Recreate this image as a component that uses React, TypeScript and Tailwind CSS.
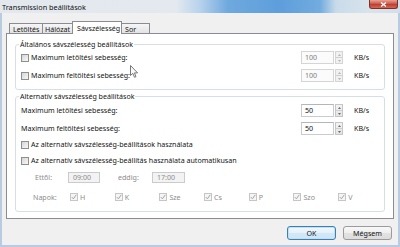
import React from "react";

function Check({ checked = false, disabled = false }: { checked?: boolean; disabled?: boolean }) {
  return (
    <span
      className={
        disabled
          ? "w-[8px] h-[8px] shrink-0 border border-[#c6c6c6] bg-[#f5f5f5] flex items-center justify-center"
          : "w-[8px] h-[8px] shrink-0 border border-[#8e8f8f] bg-[linear-gradient(135deg,#d6d6d6,#f8f8f8)] flex items-center justify-center"
      }
    >
      {checked && (
        <svg width="6" height="6" viewBox="0 0 6 6">
          <path d="M0.8 3.1 L2.4 4.8 L5.3 0.8" fill="none" stroke="#a4a4a4" strokeWidth="1" />
        </svg>
      )}
    </span>
  );
}

function Spin({ value, disabled = false }: { value: string; disabled?: boolean }) {
  return (
    <div className="flex h-[13px] w-[42px] shrink-0">
      <div
        className={
          disabled
            ? "w-[33px] h-full border border-[#d3d5d8] bg-[#fbfbfb] text-[#808080] pl-[3px] flex items-center"
            : "w-[33px] h-full border border-[#c8cbd0] border-t-[#b3b6bc] bg-white text-[#111] pl-[3px] flex items-center"
        }
      >
        {value}
      </div>
      <div
        className={
          disabled
            ? "ml-[1px] w-[8px] h-full border border-[#d5d5d5] bg-[#f1f1f1] flex flex-col"
            : "ml-[1px] w-[8px] h-full border border-[#c3c6cb] bg-[linear-gradient(#f4f4f4,#e4e4e4)] flex flex-col"
        }
      >
        <div className="flex-1 flex items-center justify-center border-b border-[#d0d0d0]">
          <svg width="3" height="2" viewBox="0 0 3 2">
            <path d="M0 2 L1.5 0 L3 2 Z" fill={disabled ? "#b5b5b5" : "#6a6a6a"} />
          </svg>
        </div>
        <div className="flex-1 flex items-center justify-center">
          <svg width="3" height="2" viewBox="0 0 3 2">
            <path d="M0 0 L1.5 2 L3 0 Z" fill={disabled ? "#b5b5b5" : "#6a6a6a"} />
          </svg>
        </div>
      </div>
    </div>
  );
}

function SpinRow({
  label,
  check = false,
  value,
  disabled = false,
  className = "",
}: {
  label: string;
  check?: boolean;
  value: string;
  disabled?: boolean;
  className?: string;
}) {
  return (
    <div className={"flex items-center h-[13px] " + className}>
      {check && <Check />}
      <span className={check ? "ml-[2px] whitespace-nowrap" : "whitespace-nowrap"}>{label}</span>
      <div className="flex-1" />
      <Spin value={value} disabled={disabled} />
      <span className="w-[30px] ml-[11px] shrink-0">KB/s</span>
    </div>
  );
}

function Day({ label }: { label: string }) {
  return (
    <div className="w-[44.7px] shrink-0 flex items-center">
      <Check checked disabled />
      <span className="ml-[2px] text-[#8d8d8d]">{label}</span>
    </div>
  );
}

export default function App() {
  return (
    <div className="w-[400px] h-[247px] overflow-hidden bg-[#b8cbe0] relative font-['Noto_Sans',sans-serif] text-[7.1px] text-[#151515] leading-[9px]">
      {/* Title bar */}
      <div className="h-[13px] flex items-start bg-[linear-gradient(90deg,#e2e8ee_0%,#e3e9ef_44%,#b7d2ec_50%,#6ea9de_57%,#5d9edb_70%,#72acdf_80%,#c9dbea_84%,#d8e3ec_92%,#d2dfea_100%)]">
        <span className="pl-[2px] pt-[2.5px] text-[7.3px] text-[#111]">Transmission beállítások</span>
        <div className="flex-1" />
        <div className="mr-[2px] w-[29px] h-[9px] rounded-b-[3px] border border-t-0 border-[#7d3128] bg-[linear-gradient(#e7a397,#cf5a4b_45%,#c13e2f_55%,#d06a55)] flex items-center justify-center">
          <svg width="7" height="5" viewBox="0 0 7 5">
            <path d="M1 0.5 L6 4.5 M6 0.5 L1 4.5" stroke="#fff" strokeWidth="1.3" />
          </svg>
        </div>
      </div>

      {/* Body */}
      <div className="mx-[2px] h-[232px] bg-[#f0f0f0] px-[4px] pt-[8px] flex flex-col">
        {/* Tabs */}
        <div className="flex items-end h-[12px] pl-[3px] relative z-10">
          <div className="w-[33px] h-[10px] border-t border-l border-[#898c95] bg-[linear-gradient(#f6f6f6,#e3e3e3)] pl-[3px] pt-[1px]">Letöltés</div>
          <div className="w-[30px] h-[10px] border-t border-l border-[#898c95] bg-[linear-gradient(#f6f6f6,#e3e3e3)] pl-[2px] pt-[1px]">Hálózat</div>
          <div className="w-[50px] h-[13px] -mb-px border-t border-l border-r border-[#898c95] bg-white pl-[4px] pt-[2px]">Sávszélesség</div>
          <div className="w-[28px] h-[10px] border-t border-r border-[#898c95] bg-[linear-gradient(#f6f6f6,#e3e3e3)] pl-[3px] pt-[1px]">Sor</div>
        </div>

        {/* Panel */}
        <div className="h-[186px] border border-[#898c95] bg-white px-[8px] pt-[5px]">
          <fieldset className="border border-[#d5dfe5] rounded-[3px] pl-[5px] pb-[7px] min-w-0">
            <legend className="h-[10px] leading-[10px] px-[1px] -ml-[2px]">Általános sávszélesség beállítások</legend>
            <div className="mt-[2px] flex flex-col gap-[5px]">
              <SpinRow check label="Maximum letöltési sebesség:" value="100" disabled />
              <SpinRow check label="Maximum feltöltési sebesség:" value="100" disabled />
            </div>
          </fieldset>

          <fieldset className="mt-[1px] border border-[#d5dfe5] rounded-[3px] pl-[5px] pb-[8px] min-w-0">
            <legend className="h-[10px] leading-[10px] px-[1px] -ml-[2px]">Alternatív sávszélesség beállítások</legend>
            <div className="flex flex-col">
              <SpinRow className="mt-[3px]" label="Maximum letöltési sebesség:" value="50" />
              <SpinRow className="mt-[5px]" label="Maximum feltöltési sebesség:" value="50" />
              <div className="mt-[3px] h-[13px] flex items-center">
                <Check />
                <span className="ml-[2px] whitespace-nowrap">Az alternatív sávszélesség-beállítások használata</span>
              </div>
              <div className="mt-[3px] h-[13px] flex items-center">
                <Check />
                <span className="ml-[2px] whitespace-nowrap">Az alternatív sávszélesség-beállítás használata automatikusan</span>
              </div>
              <div className="mt-[5px] h-[11px] flex items-center pl-[14px] text-[#8d8d8d]">
                <span className="w-[33px] shrink-0">Ettől:</span>
                <div className="w-[32px] h-[11px] border border-[#c9cbcf] bg-[#f3f3f3] pl-[4px] flex items-center">09:00</div>
                <span className="ml-[18px] w-[34px] shrink-0">eddig:</span>
                <div className="w-[33px] h-[11px] border border-[#c9cbcf] bg-[#f3f3f3] pl-[4px] flex items-center">17:00</div>
              </div>
              <div className="mt-[8px] h-[12px] flex items-center pl-[12px]">
                <span className="w-[37px] shrink-0 text-[#8d8d8d]">Napok:</span>
                <Day label="H" />
                <Day label="K" />
                <Day label="Sze" />
                <Day label="Cs" />
                <Day label="P" />
                <Day label="Szo" />
                <Day label="V" />
              </div>
            </div>
          </fieldset>
        </div>

        {/* Buttons */}
        <div className="mt-[7px] flex justify-end gap-[7px] pr-[2px]">
          <div className="w-[49px] h-[14px] rounded-[3px] border border-[#3c7fb1] bg-[linear-gradient(#f4f9fd,#e3f0fa_50%,#d3e8f7_50%,#cfe6f6)] flex items-center justify-center shadow-[inset_0_0_0_1px_#bfe0f5]">
            OK
          </div>
          <div className="w-[49px] h-[14px] rounded-[3px] border border-[#9b9b9b] bg-[linear-gradient(#f8f8f8,#eeeeee_50%,#e2e2e2_50%,#dcdcdc)] flex items-center justify-center">
            Mégsem
          </div>
        </div>
      </div>

      {/* Mouse cursor */}
      <svg className="absolute left-[130px] top-[65px]" width="9" height="13" viewBox="0 0 9 13">
        <path d="M0.5 0.5 L0.5 10.5 L2.8 8.4 L4.5 12.3 L6 11.6 L4.4 7.9 L7.6 7.9 Z" fill="#fafafa" stroke="#6a6a6a" strokeWidth="0.9" />
      </svg>
    </div>
  );
}
